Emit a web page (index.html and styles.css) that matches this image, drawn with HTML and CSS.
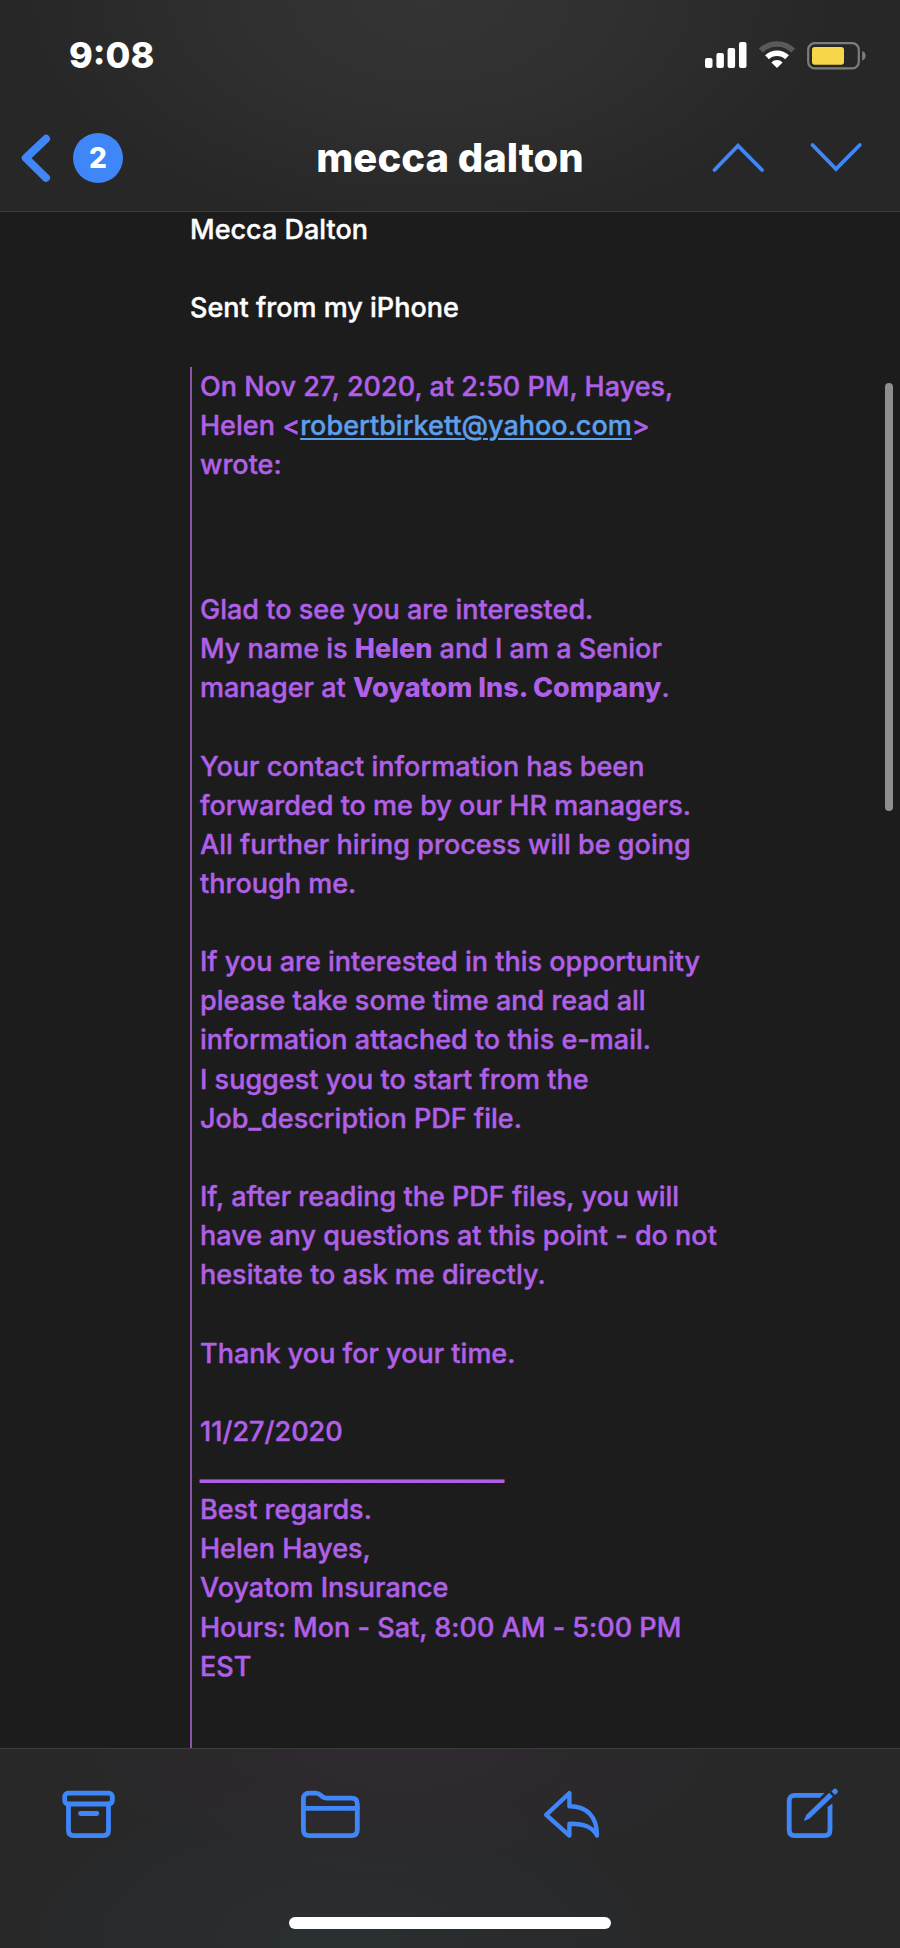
FILE: index.html
```html
<!DOCTYPE html>
<html lang="en">
    <head>
        <meta charset="UTF-8" />
        <meta name="viewport" content="width=device-width, initial-scale=1.0" />
        <title>mecca dalton</title>
        <link rel="stylesheet" href="styles.css">
    </head>
    <body>
        <div id="container">
            <header class="top">
                <div class="status-bar">
                    <span class="time">9:08</span>
                    <div class="status-icons">
                        <svg width="42" height="27" viewBox="0 0 42 27" fill="#fff">
                            <rect x="0" y="17" width="7.5" height="10" rx="2" />
                            <rect x="11.4" y="12" width="7.5" height="15" rx="2" />
                            <rect x="22.6" y="7" width="7.5" height="20" rx="2" />
                            <rect x="34" y="1" width="7.5" height="26" rx="2" />
                        </svg>
                        <svg class="wifi" width="38" height="27" viewBox="0 0 38 27" fill="none" stroke-width="5.6">
                            <path d="M2.8 9.6A23.2 23.2 0 0 1 35.2 9.6" stroke="#595959" />
                            <path d="M9 16.2A14.5 14.5 0 0 1 29 16.2" stroke="#fff" />
                            <path d="M19 27L13.4 21.4A8 8 0 0 1 24.6 21.4Z" fill="#fff" />
                        </svg>
                        <svg class="battery" width="60" height="28" viewBox="0 0 60 28">
                            <rect x="1.2" y="1.2" width="50.6" height="25.2" rx="6.5" fill="none" stroke="#7c7e7c" stroke-width="2.2" />
                            <rect x="5" y="5" width="32" height="17.8" rx="2.8" fill="#f7d64a" />
                            <path d="M55.2 9C57.4 9.8 58.6 11.6 58.6 13.8S57.4 17.8 55.2 18.8Z" fill="#7c7e7c" />
                        </svg>
                    </div>
                </div>
                <nav class="nav-bar">
                    <div class="back">
                        <svg width="32" height="50" viewBox="0 0 32 50">
                            <path d="M26 5.8L5.8 25L26 44.8" stroke-width="8" />
                        </svg>
                        <span class="count">2</span>
                    </div>
                    <h1>mecca dalton</h1>
                    <div class="arrows">
                        <svg width="52" height="30" viewBox="0 0 52 30">
                            <path class="sharp" d="M2.5 27L26 2.6L50 27" stroke-width="3.8" />
                        </svg>
                        <svg width="52" height="30" viewBox="0 0 52 30">
                            <path class="sharp" d="M2.5 2L26 26L49.8 2" stroke-width="3.8" />
                        </svg>
                    </div>
                </nav>
            </header>

            <main class="mail">
                <p>Mecca Dalton</p>
                <p>Sent from my iPhone</p>
                <blockquote>
                    <p class="intro">On Nov 27, 2020, at 2:50 PM, Hayes,<br>
                    Helen &lt;<a href="#">robertbirkett@yahoo.com</a>&gt;<br>
                    wrote:</p>
                    <p>Glad to see you are interested.<br>
                    My name is <b>Helen</b> and I am a Senior<br>
                    manager at <b>Voyatom Ins. Company</b>.</p>
                    <p>Your contact information has been<br>
                    forwarded to me by our HR managers.<br>
                    All further hiring process will be going<br>
                    through me.</p>
                    <p>If you are interested in this opportunity<br>
                    please take some time and read all<br>
                    information attached to this e-mail.<br>
                    I suggest you to start from the<br>
                    Job_description PDF file.</p>
                    <p>If, after reading the PDF files, you will<br>
                    have any questions at this point - do not<br>
                    hesitate to ask me directly.</p>
                    <p>Thank you for your time.</p>
                    <p>11/27/2020<br>
                    <span class="line">________________________</span><br>
                    Best regards.<br>
                    Helen Hayes,<br>
                    Voyatom Insurance<br>
                    Hours: Mon - Sat, 8:00 AM - 5:00 PM<br>
                    EST</p>
                </blockquote>
                <div class="scrollbar"></div>
            </main>

            <footer class="toolbar">
                <div class="actions">
                    <!-- archive -->
                    <svg width="54" height="52" viewBox="0 0 54 52" stroke-width="4.8">
                        <rect x="2.7" y="3.2" width="47.6" height="10.8" rx="3.4" />
                        <path d="M6.5 14V40.5Q6.5 45.7 11.7 45.7H41.3Q46.5 45.7 46.5 40.5V14" />
                        <path d="M18.5 23.5H34.8" />
                    </svg>
                    <!-- folder -->
                    <svg width="60" height="52" viewBox="0 0 60 52" stroke-width="4.8">
                        <path d="M3.4 39.7V9Q3.4 3.2 9.2 3.2H15.5Q18.5 3.2 20.8 5.3L22.4 6.7Q24.2 8.2 27 8.2H51.5Q57.3 8.2 57.3 14V39.7Q57.3 45.7 51.3 45.7H9.4Q3.4 45.7 3.4 39.7Z" />
                        <path d="M3.4 18.3H57.3" />
                    </svg>
                    <!-- reply -->
                    <svg width="58" height="52" viewBox="0 0 58 52" stroke-width="4.4">
                        <path d="M2.2 24.8L25.4 3.2V16.3C43 16.2 53 26.7 53 45.6C49 37.2 41 33.5 25.4 33.7V45.6Z" />
                    </svg>
                    <!-- compose -->
                    <svg width="54" height="54" viewBox="0 0 54 54" stroke-width="4.8">
                        <path class="cut" d="M34 5.4H9Q3.2 5.4 3.2 11.2V40Q3.2 45.7 9 45.7H38.2Q44 45.7 44 40V17" />
                        <path class="fill" d="M33.8 7.8V3H38.6ZM41.6 17.3L46.4 13.2V18H41.6Z" />
                        <path class="fill" d="M18 30.2L20.4 24.7L43.2 2.8L46.8 6.4L23.7 28.6L18.6 30.7Z" />
                        <path class="fill" d="M45.4 1.4L48 -1.2Q49 -2 50 -1.2L51.6 .4Q52.4 1.4 51.6 2.4L49 5Z" />
                    </svg>
                </div>
                <div class="home"></div>
            </footer>
        </div>
    </body>
</html>
```
FILE: styles.css
```css
* {
    box-sizing: border-box;
}
body {
    margin: 0;
    background-color: #1c1c1d;
    color: #fff;
    font-family: Inter, "Liberation Sans", sans-serif;
}
#container {
    height: 1948px;
    display: flex;
    flex-direction: column;
    overflow: hidden;
}
svg {
    display: block;
    flex: none;
    overflow: visible;
}

/* status bar and navigation */
.top {
    height: 212px;
    flex: none;
    border-bottom: 1px solid #3c3c3d;
    background: radial-gradient(ellipse 400px 230px at 430px 0, #343434, #303030 45%, #272728);
}
.status-bar {
    height: 108px;
    padding: 0 32px 0 69px;
    display: flex;
    justify-content: space-between;
}
.time {
    margin-top: 33px;
    font-size: 36px;
    line-height: 44px;
    font-weight: 800;
}
.status-icons {
    display: flex;
    align-items: flex-start;
    padding-top: 41px;
}
.wifi {
    margin: 0 11px;
}
.battery {
    margin-top: 1px;
    margin-right: 1px;
}
.nav-bar {
    height: 100px;
    padding: 0 38px 0 20px;
    display: grid;
    grid-template-columns: 260px 1fr 242px;
    align-items: center;
}
.nav-bar path,
.actions path,
.actions rect {
    fill: none;
    stroke: #3f86f8;
    stroke-linecap: round;
    stroke-linejoin: round;
}
.nav-bar .sharp {
    stroke-linejoin: miter;
}
.back {
    display: flex;
    align-items: center;
    gap: 21px;
}
.count {
    width: 50px;
    height: 50px;
    border-radius: 50%;
    background-color: #3f86f8;
    font-size: 28px;
    line-height: 50px;
    font-weight: 800;
    text-align: center;
}
h1 {
    margin: 0;
    font-size: 40px;
    line-height: 50px;
    font-weight: 800;
    text-align: center;
    white-space: nowrap;
}
.arrows {
    width: 150px;
    margin-left: auto;
    display: flex;
    justify-content: space-between;
}

/* message */
.mail {
    position: relative;
    flex: 1;
    min-height: 0;
    padding-left: 190px;
    overflow: hidden;
    font-size: 27px;
    line-height: 39.14px;
    font-weight: 500;
    letter-spacing: 0.01px;
    white-space: nowrap;
    -webkit-text-stroke: 0.4px;
}
.mail p {
    margin: 0 0 39.14px;
}
.mail > p:first-child {
    margin-top: -2px;
}
blockquote {
    height: 1400px;
    margin: 0;
    padding-left: 8px;
    border-left: 2px solid #8c53b3;
    color: #b060e6;
}
.mail .intro {
    margin-bottom: 106px;
}
a {
    color: #5e9fe9;
    text-decoration-thickness: 2px;
    text-underline-offset: 3px;
}
b {
    font-weight: 800;
    -webkit-text-stroke: 0;
}
.line {
    letter-spacing: 0.18px;
    -webkit-text-stroke: 0.8px;
}
.scrollbar {
    position: absolute;
    top: 171px;
    right: 7px;
    width: 8px;
    height: 428px;
    border-radius: 4px;
    background-color: #8e8e8e;
}

/* bottom toolbar */
.toolbar {
    height: 200px;
    flex: none;
    border-top: 1px solid #3c3c3d;
    background:
        radial-gradient(ellipse 330px 130px at 400px 0, #302a31, #302a3100),
        radial-gradient(ellipse 330px 160px at 340px 190px, #2a2f31, #2a2f3100),
        #282829;
}
.actions {
    height: 168px;
    padding: 41px 60px 0 62px;
    display: flex;
    justify-content: space-between;
    align-items: flex-start;
}
.actions .cut {
    stroke-linecap: butt;
}
.actions .fill {
    fill: #3f86f8;
    stroke: none;
}
.home {
    width: 322px;
    height: 12px;
    margin: 0 auto;
    border-radius: 6px;
    background-color: #fff;
}
```
